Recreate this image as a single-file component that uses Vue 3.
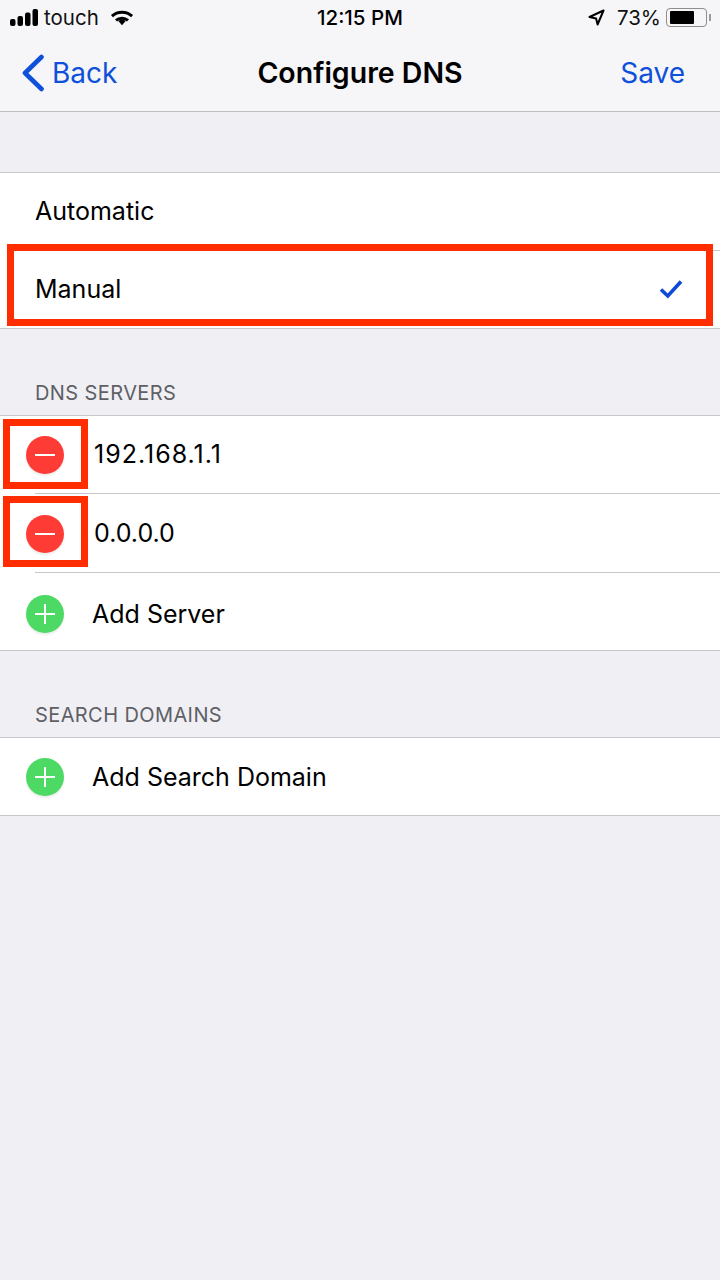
<template>
  <div class="screen">
    <div class="status-bar">
      <div class="status-left">
        <svg class="signal" width="28" height="17" viewBox="0 0 28 17">
          <rect x="0" y="10" width="5.5" height="7" rx="2" />
          <rect x="7.5" y="7" width="5.5" height="10" rx="2" />
          <rect x="15" y="3.5" width="5.5" height="13.5" rx="2" />
          <rect x="22.5" y="0" width="5.5" height="17" rx="2" />
        </svg>
        <span class="carrier">touch</span>
        <svg class="wifi" width="24" height="17" viewBox="0 0 26 18">
          <path d="M13 17.5l-4-4.6a6 6 0 0 1 8 0z" />
          <path d="M1 6.2a18 18 0 0 1 24 0l-2.2 2.5a14.6 14.6 0 0 0-19.6 0z" />
          <path d="M5.4 11a11.6 11.6 0 0 1 15.2 0l-2.2 2.4a8.2 8.2 0 0 0-10.8 0z" />
        </svg>
      </div>
      <span class="clock">12:15 PM</span>
      <div class="status-right">
        <svg class="arrow" width="17" height="17" viewBox="0 0 17 17">
          <path d="M15.5 1.5L1.5 8l6.6 1.4L9.6 15.5z" fill="none" stroke="#000" stroke-width="2" stroke-linejoin="round" />
        </svg>
        <span class="percent">73%</span>
        <div class="battery">
          <div class="battery-body"><div class="battery-fill" :style="{ width: '73%' }"></div></div>
          <div class="battery-tip"></div>
        </div>
      </div>
    </div>

    <div class="nav-bar">
      <div class="nav-back">
        <svg width="24" height="38" viewBox="0 0 24 38">
          <path d="M20.5 3L4 19l16.5 16" fill="none" stroke="#0f50da" stroke-width="4.6" stroke-linecap="round" stroke-linejoin="round" />
        </svg>
        <span>Back</span>
      </div>
      <div class="nav-title">Configure DNS</div>
      <div class="nav-save">Save</div>
    </div>

    <div class="group first">
      <div class="row plain"><span>Automatic</span></div>
      <div class="row plain last">
        <span>Manual</span>
        <svg class="check" width="24" height="20" viewBox="0 0 24 20">
          <path d="M2 10.5l6.8 6.5L22 2.5" fill="none" stroke="#0f4ad6" stroke-width="3.6" />
        </svg>
      </div>
    </div>

    <div class="section-label">DNS SERVERS</div>
    <div class="group">
      <div
        v-for="(s, i) in servers"
        :key="s.text"
        class="row icon-row"
        :class="{ last: i === servers.length - 1, 'add-server': s.add }"
      >
        <span class="round" :class="s.add ? 'add' : 'remove'">
          <span class="bar"></span>
          <span v-if="s.add" class="bar vert"></span>
        </span>
        <span :class="s.add ? 'add-text' : 'server-text'">{{ s.text }}</span>
      </div>
    </div>

    <div class="section-label">SEARCH DOMAINS</div>
    <div class="group">
      <div class="row icon-row last">
        <span class="round add"><span class="bar"></span><span class="bar vert"></span></span>
        <span class="add-text">Add Search Domain</span>
      </div>
    </div>

    <!-- red annotation boxes drawn over the screenshot -->
    <div class="mark mark-manual"></div>
    <div class="mark mark-one"></div>
    <div class="mark mark-two"></div>
  </div>
</template>

<script setup>
const servers = [
  { text: '192.168.1.1' },
  { text: '0.0.0.0' },
  { text: 'Add Server', add: true },
]
</script>

<style>
html, body {
  margin: 0;
  background: #efeff4;
}
</style>

<style scoped>
.screen {
  position: relative;
  width: 720px;
  height: 1280px;
  background: #efeff4;
  font-family: Inter, "Liberation Sans", sans-serif;
  color: #000;
  overflow: hidden;
}

.status-bar {
  height: 40px;
  background: #f6f6f9;
  display: flex;
  align-items: center;
  justify-content: space-between;
  padding: 0 9px 5px 10px;
  font-size: 20.5px;
  box-sizing: border-box;
  position: relative;
}

.status-left, .status-right {
  display: flex;
  align-items: center;
}

.signal {
  fill: #000;
}

.carrier {
  margin-left: 6px;
  color: #111;
}

.wifi {
  margin-left: 11px;
  fill: #000;
}

.clock {
  position: absolute;
  left: 317px;
  font-weight: 500;
}

.arrow {
  margin-right: 12px;
}

.percent {
  color: #111;
}

.battery {
  display: flex;
  align-items: center;
  margin-left: 5px;
}

.battery-body {
  width: 33px;
  height: 13px;
  border: 1px solid #8e8e8e;
  border-radius: 4px;
  padding: 2px 3px;
  box-sizing: content-box;
}

.battery-fill {
  height: 100%;
  background: #000;
  border-radius: 1px;
}

.battery-tip {
  width: 2px;
  height: 7px;
  background: #9a9a9a;
  margin-left: 2px;
}

.nav-bar {
  height: 72px;
  box-sizing: border-box;
  background: #f6f6f9;
  border-bottom: 1px solid #bdbdc0;
  display: flex;
  align-items: center;
  justify-content: space-between;
  padding: 0 35px 6px 21px;
  font-size: 28px;
  position: relative;
}

.nav-back {
  display: flex;
  align-items: center;
  gap: 7px;
  color: #0f50da;
}

.nav-title {
  position: absolute;
  left: 0;
  right: 0;
  text-align: center;
  font-size: 28.5px;
  font-weight: 600;
}

.nav-save {
  color: #0f50da;
}

.group {
  background: #fff;
  border-top: 1px solid #c8c7cc;
}

.group.first {
  margin-top: 60px;
}

.row {
  height: 78px;
  display: flex;
  align-items: center;
  font-size: 25px;
  box-sizing: border-box;
  position: relative;
}

.row::after {
  content: "";
  position: absolute;
  left: 35px;
  right: 0;
  bottom: 0;
  height: 1px;
  background: #c8c7cc;
}

.row.last::after {
  left: 0;
}

.plain {
  padding: 0 37px 2px 35px;
  justify-content: space-between;
}

.icon-row {
  padding-left: 26px;
}

.icon-row:nth-child(2) {
  height: 79px;
}

.icon-row:first-child .server-text {
  letter-spacing: 1px;
}

.add-server {
  padding-top: 3px;
}

.section-label {
  font-size: 20px;
  letter-spacing: 0.4px;
  color: #5f5f66;
  padding-left: 35px;
  display: flex;
  align-items: flex-end;
  box-sizing: border-box;
  height: 86px;
  padding-bottom: 10px;
}

.round {
  position: relative;
  width: 38px;
  height: 38px;
  border-radius: 50%;
  margin-right: 30px;
  flex-shrink: 0;
  box-shadow: 0 2px 2px rgba(0, 0, 0, 0.08);
}

.remove {
  background: #ff3b36;
}

.add {
  background: #4cd964;
}

.bar {
  position: absolute;
  left: 9px;
  top: 18px;
  width: 20px;
  height: 2px;
  background: #fff;
}

.bar.vert {
  left: 18px;
  top: 9px;
  width: 2px;
  height: 20px;
}

.server-text {
  margin-bottom: 2px;
}

.add-text {
  margin-left: -2px;
}

.mark {
  position: absolute;
  border: 7px solid #ff2d00;
  box-sizing: border-box;
}

.mark-manual {
  left: 7px;
  top: 244px;
  width: 706px;
  height: 82px;
}

.mark-one {
  left: 3px;
  top: 419px;
  width: 85px;
  height: 70px;
}

.mark-two {
  left: 3px;
  top: 496px;
  width: 85px;
  height: 71px;
}
</style>
